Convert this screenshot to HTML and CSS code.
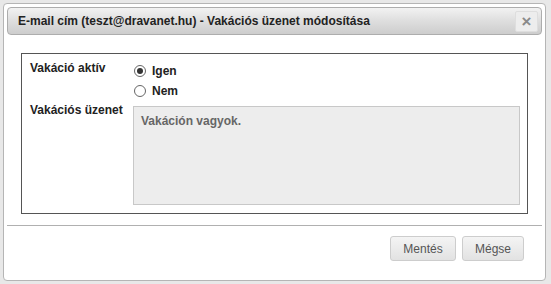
FILE: index.html
```html
<!DOCTYPE html>
<html lang="hu">
<head>
<meta charset="utf-8">
<title>Vakációs üzenet</title>
<link rel="stylesheet" href="styles.css">
</head>
<body>
<div class="dialog">
  <div class="titlebar">
    <span class="title">E-mail cím (teszt@dravanet.hu) - Vakációs üzenet módosítása</span>
    <span class="close">×</span>
  </div>
  <div class="content">
    <div class="box">
      <div class="row">
        <div class="label">Vakáció aktív</div>
        <div class="radios">
          <div class="radio-row"><span class="radio checked"></span><span class="radio-label">Igen</span></div>
          <div class="radio-row"><span class="radio"></span><span class="radio-label">Nem</span></div>
        </div>
      </div>
      <div class="row row-msg">
        <div class="label label-msg">Vakációs üzenet</div>
        <div class="textarea">Vakáción vagyok.</div>
      </div>
    </div>
  </div>
  <div class="buttonbar">
    <button class="btn btn-save">Mentés</button>
    <button class="btn btn-cancel">Mégse</button>
  </div>
</div>
</body>
</html>
```

FILE: styles.css
```css
html, body {
  margin: 0;
  padding: 0;
}
body {
  background: #e8e8e8;
  font-family: "Liberation Sans", Arial, sans-serif;
  font-size: 12px;
  color: #222;
  padding: 3px;
  width: 551px;
  height: 284px;
  box-sizing: border-box;
}
.dialog {
  width: 543px;
  height: 278px;
  box-sizing: border-box;
  background: #fff;
  border: 1px solid #b5b5b5;
  border-radius: 4px;
  padding: 3px;
  display: flex;
  flex-direction: column;
}
.titlebar {
  height: 28px;
  width: 535px;
  box-sizing: border-box;
  border: 1px solid #adadad;
  border-radius: 4px;
  background: linear-gradient(to bottom, #f2f2f2 0%, #dedede 50%, #cdcdcd 100%);
  display: flex;
  align-items: center;
  justify-content: space-between;
  padding: 0 3px 0 10px;
}
.title {
  font-weight: bold;
  font-size: 12px;
  color: #222;
}
.close {
  width: 23px;
  height: 21px;
  box-sizing: border-box;
  border: 1px solid #dedede;
  border-radius: 2px;
  background: #ededed;
  color: #8a8a8a;
  font-weight: bold;
  font-size: 17px;
  line-height: 19px;
  text-align: center;
}
.content {
  padding: 18px 0 0 14px;
  height: 191px;
  box-sizing: border-box;
  border-bottom: 1px solid #b0b0b0;
  width: 535px;
}
.box {
  width: 507px;
  height: 161px;
  box-sizing: border-box;
  border: 1px solid #555;
  padding: 7px 7px 8px 8px;
  display: flex;
  flex-direction: column;
}
.row {
  display: flex;
}
.label {
  width: 103px;
  font-weight: bold;
  line-height: 15px;
  flex: none;
}
.radios {
  display: flex;
  flex-direction: column;
}
.radio-row {
  display: flex;
  align-items: center;
  height: 20px;
}
.radio {
  width: 12px;
  height: 12px;
  box-sizing: border-box;
  border: 1px solid #666;
  border-radius: 50%;
  background: #fff;
  margin-left: 1px;
  margin-right: 6px;
  position: relative;
}
.radio.checked::after {
  content: "";
  position: absolute;
  left: 2px;
  top: 2px;
  width: 6px;
  height: 6px;
  border-radius: 50%;
  background: #333;
}
.radio-label {
  font-weight: bold;
  font-size: 12px;
}
.row-msg {
  margin-top: 5px;
}
.label-msg {
  margin-top: -3px;
}
.textarea {
  width: 387px;
  height: 99px;
  box-sizing: border-box;
  background: #ededed;
  border: 1px solid #c8c8c8;
  color: #666;
  font-weight: bold;
  padding: 7px 7px;
  line-height: 15px;
}
.buttonbar {
  display: flex;
  justify-content: flex-end;
  gap: 6px;
  padding: 10px 18px 0 0;
}
.btn {
  height: 25px;
  box-sizing: border-box;
  border: 1px solid #cdcdcd;
  border-radius: 3px;
  background: linear-gradient(to bottom, #f4f4f4 0%, #e2e2e2 100%);
  color: #555;
  font-family: "Liberation Sans", Arial, sans-serif;
  font-size: 12px;
  padding: 0;
  margin: 0;
}
.btn-save {
  width: 66px;
}
.btn-cancel {
  width: 62px;
}
```
